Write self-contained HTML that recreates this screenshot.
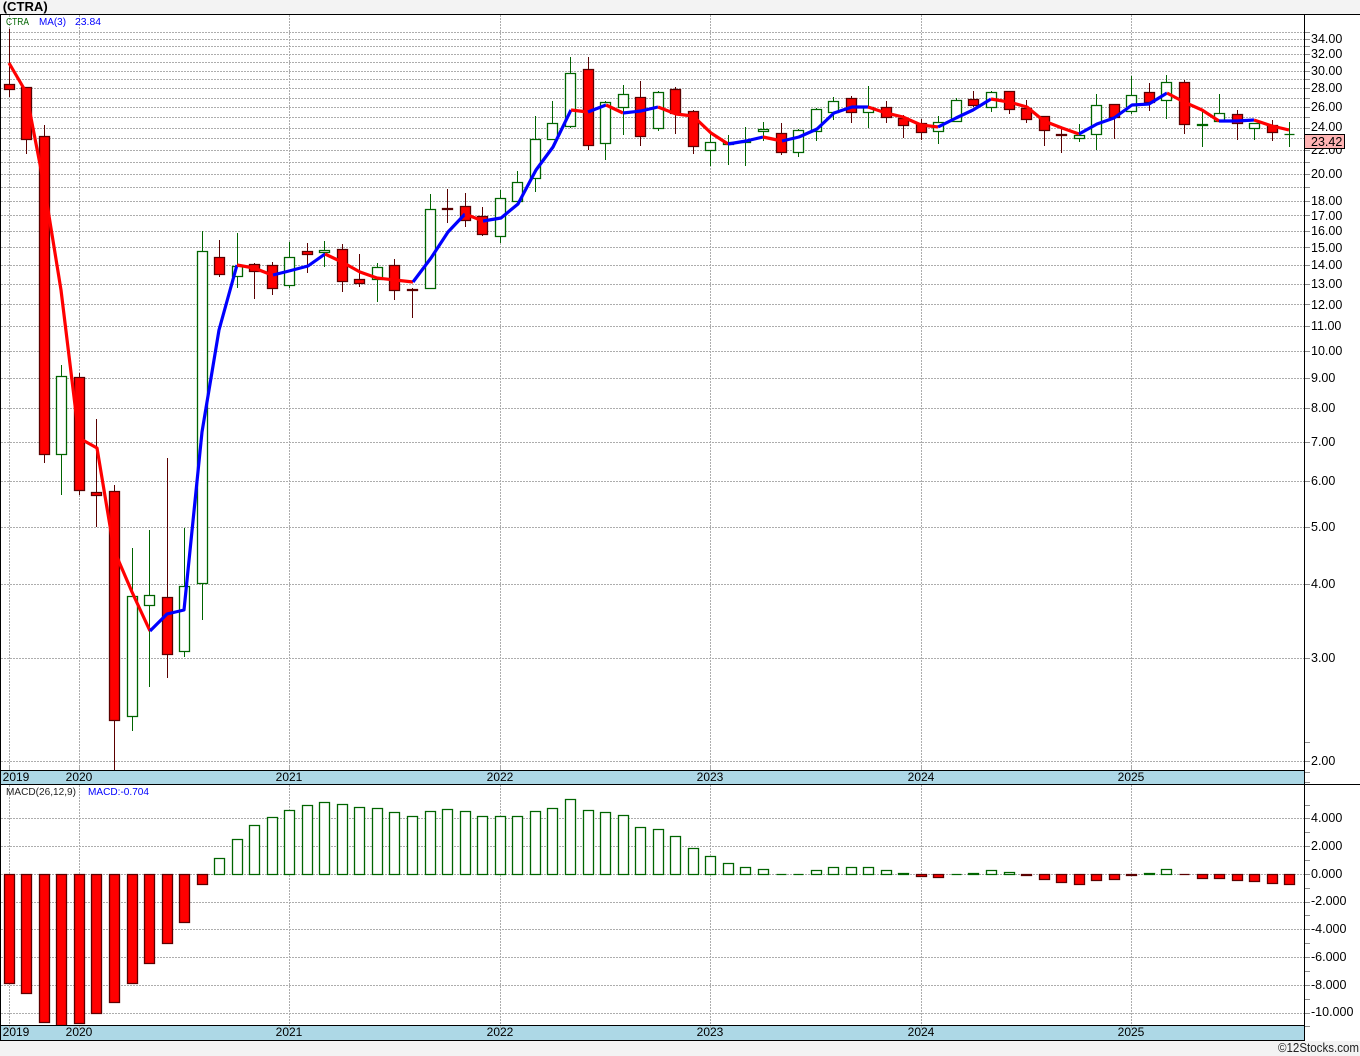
<!DOCTYPE html>
<html lang="en">
<head>
<meta charset="utf-8">
<title>(CTRA)</title>
<style>
html,body{margin:0;padding:0;background:#f3f3f3;width:1360px;height:1056px;overflow:hidden}
svg{display:block}
text{font-family:"Liberation Sans",Arial,sans-serif;fill:#000}
.a text{font-size:12.5px}
.d text{font-size:12px;text-anchor:middle}
.l text{font-size:10.5px}
</style>
</head>
<body>
<svg xmlns="http://www.w3.org/2000/svg" width="1360" height="1056" viewBox="0 0 1360 1056">
<rect width="1360" height="1056" fill="#f3f3f3"/>
<rect x="0" y="14" width="1360" height="1027" fill="#fff"/>
<text x="2.7" y="11" textLength="45" lengthAdjust="spacingAndGlyphs" style="font-size:13.2px;font-weight:bold">(CTRA)</text>

<g shape-rendering="crispEdges">
<!-- grid -->
<path fill="none" stroke="#adadad" stroke-dasharray="2 1" d="M1 32.5H1304M1 39.5H1304M1 46.5H1304M1 54.5H1304M1 62.5H1304M1 71.5H1304M1 79.5H1304M1 88.5H1304M1 98.5H1304M1 107.5H1304M1 117.5H1304M1 128.5H1304M1 138.5H1304M1 150.5H1304M1 162.5H1304M1 174.5H1304M1 187.5H1304M1 201.5H1304M1 215.5H1304M1 231.5H1304M1 247.5H1304M1 265.5H1304M1 284.5H1304M1 304.5H1304M1 326.5H1304M1 351.5H1304M1 378.5H1304M1 408.5H1304M1 442.5H1304M1 481.5H1304M1 527.5H1304M1 584.5H1304M1 658.5H1304M1 761.5H1304M1 818.5H1304M1 846.5H1304M1 874.5H1304M1 902.5H1304M1 929.5H1304M1 957.5H1304M1 985.5H1304M1 1013.5H1304M9.5 15V770M79.5 15V770M289.5 15V770M500.5 15V770M710.5 15V770M921.5 15V770M1131.5 15V770M9.5 785V1025M79.5 785V1025M289.5 785V1025M500.5 785V1025M710.5 785V1025M921.5 785V1025M1131.5 785V1025"/>
<path fill="none" stroke="#a9a9a9" d="M9.5 765V770M79.5 765V770M289.5 765V770M500.5 765V770M710.5 765V770M921.5 765V770M1131.5 765V770"/>
<!-- axis ticks -->
<path fill="none" stroke="#8c8c8c" d="M1305 32.5h5M1305 39.5h5M1305 46.5h5M1305 54.5h5M1305 62.5h5M1305 71.5h5M1305 79.5h5M1305 88.5h5M1305 98.5h5M1305 107.5h5M1305 117.5h5M1305 128.5h5M1305 138.5h5M1305 150.5h5M1305 162.5h5M1305 174.5h5M1305 187.5h5M1305 201.5h5M1305 215.5h5M1305 231.5h5M1305 247.5h5M1305 265.5h5M1305 284.5h5M1305 304.5h5M1305 326.5h5M1305 351.5h5M1305 378.5h5M1305 408.5h5M1305 442.5h5M1305 481.5h5M1305 527.5h5M1305 584.5h5M1305 658.5h5M1305 742.5h5M1305 761.5h5M1305 772.5h5M1305 782.5h5M1305 805.5h5M1305 818.5h5M1305 832.5h5M1305 846.5h5M1305 860.5h5M1305 874.5h5M1305 888.5h5M1305 902.5h5M1305 915.5h5M1305 929.5h5M1305 943.5h5M1305 957.5h5M1305 971.5h5M1305 985.5h5M1305 999.5h5M1305 1013.5h5M1305 1026.5h5"/>

<!-- candle wicks -->
<path fill="none" stroke="#5a0000" d="M9.5 29V97M26.5 87V154M44.5 125V463M79.5 373V495M96.5 419V527M114.5 485V770M167.5 458V678M219.5 240V277M254.5 263V299M272.5 262V295M307.5 243V273M342.5 244V292M359.5 254V287M394.5 259V300M412.5 288V318M447.5 189V223M465.5 193V227M482.5 207V236M588.5 57V150M640.5 81V146M675.5 87V134M693.5 110V154M781.5 123V155M851.5 96V123M886.5 101V123M903.5 115V138M921.5 119V140M973.5 91V107M1009.5 91V114M1026.5 100V123M1044.5 116V146M1061.5 129V153M1114.5 104V139M1149.5 83V111M1184.5 80V134M1237.5 110V140M1272.5 120V141"/>
<path fill="none" stroke="#006400" d="M61.5 365V495M132.5 548V731M149.5 530V687M184.5 528V657M202.5 231V620M237.5 233V288M289.5 242V288M324.5 241V267M377.5 263V302M430.5 194V289M500.5 190V243M517.5 171V201M535.5 116V192M552.5 101V139M570.5 57V128M605.5 101V160M623.5 85V135M658.5 91V131M710.5 132V166M728.5 135V165M745.5 127V166M763.5 122V141M798.5 129V157M816.5 108V141M833.5 97V120M868.5 86V128M938.5 116V144M956.5 98V121M991.5 91V112M1079.5 124V142M1096.5 94V150M1131.5 76V114M1166.5 75V119M1202.5 112V147M1219.5 94V121M1254.5 123V140M1289.5 122V147"/>
</g>

<g stroke-width="1.3">
<!-- up candles -->
<path fill="#fff" stroke="#006400" d="M56.5 376.5h10v78h-10zM127.5 596.5h10v120h-10zM144.5 595.5h10v10h-10zM179.5 586.5h10v65h-10zM197.5 251.5h10v332h-10zM232.5 266.5h10v10h-10zM284.5 257.5h10v28h-10zM319.5 250.5h10v2h-10zM372.5 267.5h10v12h-10zM425.5 209.5h10v79h-10zM495.5 198.5h10v38h-10zM512.5 182.5h10v19h-10zM530.5 139.5h10v39h-10zM547.5 123.5h10v16h-10zM565.5 73.5h10v53h-10zM600.5 102.5h10v41h-10zM618.5 94.5h10v13h-10zM653.5 92.5h10v36h-10zM705.5 142.5h10v8h-10zM723.5 142.5h10v2h-10zM740.5 141.5h10v1h-10zM758.5 129.5h10v2h-10zM793.5 130.5h10v22h-10zM811.5 109.5h10v22h-10zM828.5 101.5h10v11h-10zM863.5 107.5h10v5h-10zM933.5 122.5h10v9h-10zM951.5 100.5h10v21h-10zM986.5 92.5h10v15h-10zM1074.5 135.5h10v3h-10zM1091.5 105.5h10v29h-10zM1126.5 95.5h10v16h-10zM1161.5 82.5h10v18h-10zM1197.5 124.5h10v1h-10zM1214.5 113.5h10v8h-10zM1249.5 123.5h10v5h-10zM1284.5 134.5h10"/>
<!-- down candles -->
<path fill="#f00" stroke="#5a0000" d="M4.5 84.5h10v5h-10zM21.5 87.5h10v52h-10zM39.5 136.5h10v318h-10zM74.5 377.5h10v113h-10zM91.5 492.5h10v3h-10zM109.5 491.5h10v229h-10zM162.5 597.5h10v57h-10zM214.5 257.5h10v17h-10zM249.5 264.5h10v7h-10zM267.5 265.5h10v23h-10zM302.5 251.5h10v3h-10zM337.5 249.5h10v32h-10zM354.5 279.5h10v4h-10zM389.5 265.5h10v25h-10zM407.5 289.5h10v1h-10zM442.5 208.5h10v1h-10zM460.5 206.5h10v14h-10zM477.5 216.5h10v18h-10zM583.5 69.5h10v76h-10zM635.5 97.5h10v39h-10zM670.5 89.5h10v24h-10zM688.5 111.5h10v35h-10zM776.5 133.5h10v19h-10zM846.5 98.5h10v14h-10zM881.5 107.5h10v10h-10zM898.5 118.5h10v7h-10zM916.5 123.5h10v9h-10zM968.5 99.5h10v6h-10zM1004.5 91.5h10v18h-10zM1021.5 108.5h10v11h-10zM1039.5 116.5h10v14h-10zM1056.5 134.5h10v1h-10zM1109.5 104.5h10v13h-10zM1144.5 92.5h10v10h-10zM1179.5 82.5h10v42h-10zM1232.5 114.5h10v9h-10zM1267.5 125.5h10v7h-10z"/>

<!-- MACD bars -->
<path fill="#fff" stroke="#006400" d="M214.5 858.5h10V874.5h-10zM232.5 839.5h10V874.5h-10zM249.5 825.5h10V874.5h-10zM267.5 817.5h10V874.5h-10zM284.5 810.5h10V874.5h-10zM302.5 805.5h10V874.5h-10zM319.5 802.5h10V874.5h-10zM337.5 804.5h10V874.5h-10zM354.5 807.5h10V874.5h-10zM372.5 808.5h10V874.5h-10zM389.5 812.5h10V874.5h-10zM407.5 816.5h10V874.5h-10zM425.5 811.5h10V874.5h-10zM442.5 809.5h10V874.5h-10zM460.5 811.5h10V874.5h-10zM477.5 816.5h10V874.5h-10zM495.5 816.5h10V874.5h-10zM512.5 816.5h10V874.5h-10zM530.5 811.5h10V874.5h-10zM547.5 808.5h10V874.5h-10zM565.5 799.5h10V874.5h-10zM583.5 810.5h10V874.5h-10zM600.5 812.5h10V874.5h-10zM618.5 815.5h10V874.5h-10zM635.5 827.5h10V874.5h-10zM653.5 829.5h10V874.5h-10zM670.5 836.5h10V874.5h-10zM688.5 848.5h10V874.5h-10zM705.5 856.5h10V874.5h-10zM723.5 863.5h10V874.5h-10zM740.5 867.5h10V874.5h-10zM758.5 869.5h10V874.5h-10zM776.5 874.5h10M793.5 874.5h10M811.5 870.5h10V874.5h-10zM828.5 867.5h10V874.5h-10zM846.5 867.5h10V874.5h-10zM863.5 867.5h10V874.5h-10zM881.5 870.5h10V874.5h-10zM898.5 873.5h10V874.5h-10zM951.5 874.5h10M968.5 873.5h10V874.5h-10zM986.5 870.5h10V874.5h-10zM1004.5 872.5h10V874.5h-10zM1144.5 873.5h10V874.5h-10zM1161.5 869.5h10V874.5h-10z"/>
<path fill="#f00" stroke="#5a0000" d="M4.5 874.5h10V983.5h-10zM21.5 874.5h10V993.5h-10zM39.5 874.5h10V1022.5h-10zM56.5 874.5h10V1025.5h-10zM74.5 874.5h10V1023.5h-10zM91.5 874.5h10V1013.5h-10zM109.5 874.5h10V1002.5h-10zM127.5 874.5h10V983.5h-10zM144.5 874.5h10V963.5h-10zM162.5 874.5h10V943.5h-10zM179.5 874.5h10V922.5h-10zM197.5 874.5h10V884.5h-10zM916.5 874.5h10V876.5h-10zM933.5 874.5h10V877.5h-10zM1021.5 874.5h10V875.5h-10zM1039.5 874.5h10V879.5h-10zM1056.5 874.5h10V882.5h-10zM1074.5 874.5h10V884.5h-10zM1091.5 874.5h10V880.5h-10zM1109.5 874.5h10V879.5h-10zM1126.5 874.5h10V875.5h-10zM1179.5 874.5h10M1197.5 874.5h10V878.5h-10zM1214.5 874.5h10V878.5h-10zM1232.5 874.5h10V880.5h-10zM1249.5 874.5h10V881.5h-10zM1267.5 874.5h10V883.5h-10zM1284.5 874.5h10V884.5h-10z"/>
</g>

<!-- moving average -->
<g fill="none" stroke-width="3.2" stroke-linejoin="round">
<polyline stroke="#f00" points="9,63 26,92 44,185 61,290 79,438 97,448 114,550 132,592 150,631"/>
<polyline stroke="#00f" points="150,631 167,614 184,610 202,432 219,330 237,265"/>
<polyline stroke="#f00" points="237,265 254,268 272,275"/>
<polyline stroke="#00f" points="273,275 289,271 308,266 325,254"/>
<polyline stroke="#f00" points="325,254 342,262 360,272 377,278 395,280 413,282"/>
<polyline stroke="#00f" points="413,282 431,258 448,232 465,214"/>
<polyline stroke="#f00" points="465,214 483,221"/>
<polyline stroke="#00f" points="483,221 501,218 518,204 536,170 553,147 571,110"/>
<polyline stroke="#f00" points="571,110 588,112"/>
<polyline stroke="#00f" points="588,112 606,105"/>
<polyline stroke="#f00" points="606,105 623,113"/>
<polyline stroke="#00f" points="623,113 641,111 658,107"/>
<polyline stroke="#f00" points="658,107 676,114 693,116 711,133 728,144"/>
<polyline stroke="#00f" points="728,144 746,141 763,137"/>
<polyline stroke="#f00" points="763,137 782,141"/>
<polyline stroke="#00f" points="782,141 799,137 817,129 834,113 852,107 868,107"/>
<polyline stroke="#f00" points="868,107 886,113 903,117 921,125 938,127"/>
<polyline stroke="#00f" points="938,127 956,118 973,110 991,99"/>
<polyline stroke="#f00" points="991,99 1009,102 1027,107 1044,121 1062,128 1079,134"/>
<polyline stroke="#00f" points="1079,134 1097,124 1114,118 1132,105 1149,104 1167,93"/>
<polyline stroke="#f00" points="1167,93 1184,102 1202,110 1219,121"/>
<polyline stroke="#00f" points="1219,121 1237,121 1254,120"/>
<polyline stroke="#f00" points="1254,120 1272,126 1289,130"/>
</g>

<g shape-rendering="crispEdges">
<!-- date bars and frame -->
<rect x="0" y="770" width="1304" height="15" fill="#add8e6"/>
<rect x="0" y="1025" width="1304" height="16" fill="#add8e6"/>
<path fill="none" stroke="#000" d="M0 14.5H1360M0.5 14V1041M1304.5 14V1041M0 770.5H1304M0 784.5H1360M0 1025.5H1304M0 1040.5H1304"/>
<path fill="none" stroke="#a9a9a9" stroke-dasharray="2 1" d="M9.5 1026V1029M79.5 1026V1029M289.5 1026V1029M500.5 1026V1029M710.5 1026V1029M921.5 1026V1029M1131.5 1026V1029"/>
</g>

<!-- legends -->
<g class="l">
<text x="6" y="25" textLength="23" lengthAdjust="spacingAndGlyphs" style="fill:#006400">CTRA</text>
<text x="39" y="25" textLength="27" lengthAdjust="spacingAndGlyphs" style="fill:#00f">MA(3)</text>
<text x="75" y="25" textLength="26" lengthAdjust="spacingAndGlyphs" style="fill:#00f">23.84</text>
<text x="6" y="795" textLength="70" lengthAdjust="spacingAndGlyphs" style="fill:#222">MACD(26,12,9)</text>
<text x="88" y="795" textLength="61" lengthAdjust="spacingAndGlyphs" style="fill:#00f">MACD:-0.704</text>
</g>

<!-- date labels -->
<g class="d">
<text x="16" y="781">2019</text><text x="79" y="781">2020</text><text x="289" y="781">2021</text><text x="500" y="781">2022</text><text x="710" y="781">2023</text><text x="921" y="781">2024</text><text x="1131" y="781">2025</text>
<text x="16" y="1036">2019</text><text x="79" y="1036">2020</text><text x="289" y="1036">2021</text><text x="500" y="1036">2022</text><text x="710" y="1036">2023</text><text x="921" y="1036">2024</text><text x="1131" y="1036">2025</text>
</g>

<!-- axis labels -->
<g class="a">
<text x="1311" y="43">34.00</text><text x="1311" y="58">32.00</text><text x="1311" y="75">30.00</text><text x="1311" y="92">28.00</text><text x="1311" y="111">26.00</text><text x="1311" y="131">24.00</text><text x="1311" y="154">22.00</text><text x="1311" y="178">20.00</text><text x="1311" y="205">18.00</text><text x="1311" y="220">17.00</text><text x="1311" y="235">16.00</text><text x="1311" y="252">15.00</text><text x="1311" y="269">14.00</text><text x="1311" y="288">13.00</text><text x="1311" y="309">12.00</text><text x="1311" y="330">11.00</text><text x="1311" y="355">10.00</text><text x="1311" y="382">9.00</text><text x="1311" y="412">8.00</text><text x="1311" y="446">7.00</text><text x="1311" y="485">6.00</text><text x="1311" y="531">5.00</text><text x="1311" y="588">4.00</text><text x="1311" y="662">3.00</text><text x="1311" y="765">2.00</text>
<text x="1311" y="822">4.000</text><text x="1311" y="850">2.000</text><text x="1311" y="878">0.000</text><text x="1311" y="905">-2.000</text><text x="1311" y="933">-4.000</text><text x="1311" y="961">-6.000</text><text x="1311" y="989">-8.000</text><text x="1311" y="1016">-10.000</text>
<rect x="1304.5" y="134.5" width="40" height="14" fill="#ffb3b3" stroke="#000" shape-rendering="crispEdges"/>
<text x="1311" y="146">23.42</text>
<text x="1278" y="1052" textLength="81" lengthAdjust="spacingAndGlyphs" style="fill:#222">©12Stocks.com</text>
</g>
</svg>
</body>
</html>
